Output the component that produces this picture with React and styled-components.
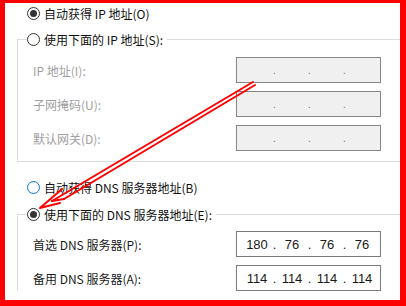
import React from "react"
import styled, { createGlobalStyle } from "styled-components"

const GlobalStyle = createGlobalStyle`
  *, ::after, ::before {
    box-sizing: border-box;
  }
  body {
    margin: 0;
    background: #fff;
    font-family: "Noto Sans CJK SC", "Noto Sans", sans-serif;
    font-size: 12px;
    color: #111;
  }
`

const Page = styled.div`
  position: relative;
  width: 406px;
  height: 306px;
`

const Frame = styled.main`
  width: 406px;
  height: 306px;
  border-style: solid;
  border-color: #f00;
  border-width: 3px 6px 6px 5px;
  background: #fff;
  overflow: hidden;
  display: flex;
  flex-direction: column;
`

const RadioRow = styled.label`
  display: flex;
  align-items: center;
  gap: 4px;
  height: 20px;
  padding-left: 22px;
  margin-top: ${p => p.$top || 0}px;
  white-space: nowrap;
`

const Legend = styled.div`
  display: flex;
  align-items: center;
  gap: 4px;
  height: 20px;
  margin: -11px 0 0 9px;
  padding-right: 4px;
  width: fit-content;
  background: #fff;
  white-space: nowrap;
`

const Circle = styled.span`
  width: 13px;
  height: 13px;
  border-radius: 50%;
  border: 1px solid ${p => (p.$hover ? "#0078d7" : "#333")};
  background: #fff;
  display: flex;
  align-items: center;
  justify-content: center;
  flex-shrink: 0;

  &::after {
    content: "";
    width: 7px;
    height: 7px;
    border-radius: 50%;
    background: #333;
    display: ${p => (p.$checked ? "block" : "none")};
  }
`

const Group = styled.section`
  margin-left: 12px;
  margin-top: ${p => p.$top}px;
  border-left: 1px solid #dcdcdc;
  border-top: 1px solid #dcdcdc;
  border-bottom: ${p => (p.$open ? "none" : "1px solid #dcdcdc")};
  padding-bottom: ${p => (p.$open ? 0 : 10)}px;
  flex-shrink: 0;
`

const Fields = styled.div`
  display: flex;
  flex-direction: column;
  gap: 8px;
  margin-top: ${p => p.$top}px;
`

const FieldRow = styled.div`
  display: grid;
  grid-template-columns: 1fr 145px;
  align-items: center;
  padding: 0 19px 0 15px;
  color: ${p => (p.$disabled ? "#a0a0a0" : "#1a1a1a")};
`

const IpBox = styled.div`
  height: 26px;
  display: flex;
  align-items: center;
  padding-left: 5px;
  border: 1px solid ${p => (p.$disabled ? "#868686" : "#7a7a7a")};
  background: ${p => (p.$disabled ? "#f0f0f0" : "#fff")};
  font-family: "Liberation Sans", "Noto Sans", sans-serif;
  font-size: 13px;
  color: #1a1a1a;
`

const Octet = styled.span`
  width: 30px;
  text-align: center;
`

const Dot = styled.span`
  width: 5px;
  text-align: center;
  color: ${p => (p.$disabled ? "#6d6d6d" : "#1a1a1a")};
  font-size: ${p => (p.$disabled ? 10 : 13)}px;
`

const Overlay = styled.svg`
  position: absolute;
  left: 0;
  top: 0;
  pointer-events: none;
`

const Radio = ({ checked, hover, children }) => (
  <>
    <Circle $checked={checked} $hover={hover} />
    <span>{children}</span>
  </>
)

const Ip = ({ value, disabled }) => {
  const parts = value ? value.split(".") : ["", "", "", ""]
  return (
    <IpBox $disabled={disabled}>
      {parts.map((p, i) => (
        <React.Fragment key={i}>
          {i > 0 && <Dot $disabled={disabled}>.</Dot>}
          <Octet>{p}</Octet>
        </React.Fragment>
      ))}
    </IpBox>
  )
}

const Field = ({ label, value, disabled }) => (
  <FieldRow $disabled={disabled}>
    <span>{label}</span>
    <Ip value={value} disabled={disabled} />
  </FieldRow>
)

const App = () => (
  <Page>
    <GlobalStyle />
    <Frame>
      <RadioRow>
        <Radio checked>自动获得 IP 地址(O)</Radio>
      </RadioRow>
      <Group $top={16}>
        <Legend>
          <Radio>使用下面的 IP 地址(S):</Radio>
        </Legend>
        <Fields $top={8}>
          <Field label="IP 地址(I):" disabled />
          <Field label="子网掩码(U):" disabled />
          <Field label="默认网关(D):" disabled />
        </Fields>
      </Group>
      <RadioRow $top={15}>
        <Radio hover>自动获得 DNS 服务器地址(B)</Radio>
      </RadioRow>
      <Group $top={17} $open>
        <Legend>
          <Radio checked>使用下面的 DNS 服务器地址(E):</Radio>
        </Legend>
        <Fields $top={7}>
          <Field label="首选 DNS 服务器(P):" value="180.76.76.76" />
          <Field label="备用 DNS 服务器(A):" value="114.114.114.114" />
        </Fields>
      </Group>
    </Frame>
    <Overlay width="406" height="306" viewBox="0 0 406 306">
      <g stroke="#f00" strokeWidth="2" fill="none" strokeLinecap="round" strokeLinejoin="round">
        <line x1="253" y1="82" x2="52" y2="201" />
        <line x1="255" y1="85" x2="64" y2="199" />
        <polyline points="62,189 40,208 60,203" />
        <line x1="52" y1="201" x2="64" y2="199" />
      </g>
    </Overlay>
  </Page>
)

export default App
